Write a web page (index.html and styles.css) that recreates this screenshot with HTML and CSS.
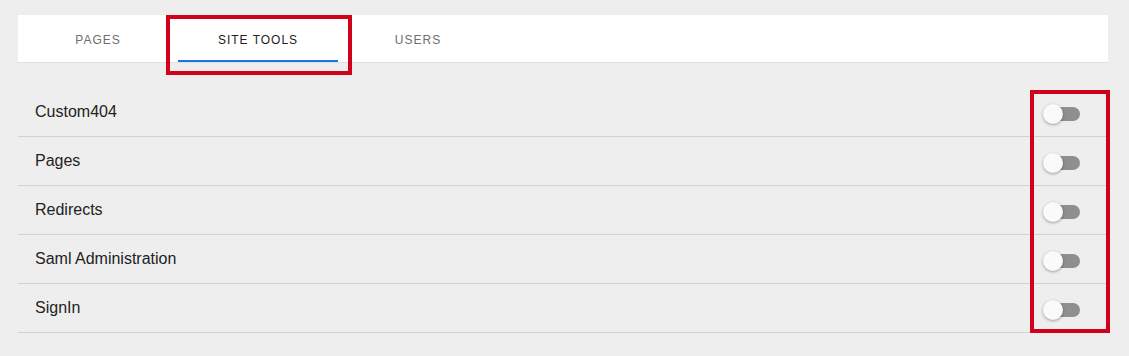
FILE: index.html
```html
<!DOCTYPE html>
<html>
<head>
<meta charset="utf-8">
<link rel="stylesheet" href="styles.css">
</head>
<body>
<div class="page">
  <div class="tabs">
    <div class="tab">PAGES</div>
    <div class="tab active">SITE TOOLS</div>
    <div class="tab">USERS</div>
  </div>
  <div class="list">
    <div class="row"><span class="label">Custom404</span><span class="switch"><span class="track"></span><span class="thumb"></span></span></div>
    <div class="row"><span class="label">Pages</span><span class="switch"><span class="track"></span><span class="thumb"></span></span></div>
    <div class="row"><span class="label">Redirects</span><span class="switch"><span class="track"></span><span class="thumb"></span></span></div>
    <div class="row"><span class="label">Saml Administration</span><span class="switch"><span class="track"></span><span class="thumb"></span></span></div>
    <div class="row"><span class="label">SignIn</span><span class="switch"><span class="track"></span><span class="thumb"></span></span></div>
  </div>
  <div class="mark mark-tab"></div>
  <div class="mark mark-toggles"></div>
</div>
</body>
</html>
```
FILE: styles.css
```css
html, body {
  margin: 0;
  padding: 0;
  background: #eeeeee;
  font-family: "Liberation Sans", Arial, sans-serif;
}
.page {
  position: relative;
  width: 1129px;
  height: 356px;
  padding: 15px 21px 0 18px;
  box-sizing: border-box;
}
.tabs {
  display: flex;
  height: 48px;
  background: #ffffff;
  border-bottom: 1px solid #e0e0e0;
  box-sizing: border-box;
}
.tab {
  width: 160px;
  display: flex;
  align-items: center;
  justify-content: center;
  font-size: 12px;
  letter-spacing: 1px;
  color: #6e6e6e;
  box-sizing: border-box;
  padding-top: 2px;
}
.tab.active {
  color: #222222;
  border-bottom: 2px solid #1a73e8;
  padding-top: 4px;
}
.list {
  margin-top: 25px;
}
.row {
  height: 49px;
  display: flex;
  align-items: center;
  justify-content: space-between;
  border-bottom: 1px solid #d3d3d3;
  box-sizing: border-box;
  padding: 0 28px 0 17px;
}
.label {
  font-size: 16px;
  color: #222222;
}
.switch {
  position: relative;
  width: 37px;
  height: 20px;
  margin-top: 3px;
}
.track {
  position: absolute;
  left: 7px;
  top: 3px;
  width: 30px;
  height: 14px;
  border-radius: 7px;
  background: #8f8f8f;
}
.thumb {
  position: absolute;
  left: 0;
  top: 0;
  width: 20px;
  height: 20px;
  border-radius: 50%;
  background: #fafafa;
  box-shadow: 0 1px 3px rgba(0,0,0,0.35);
}
.mark {
  position: absolute;
  border: 4px solid #d0021b;
  box-sizing: border-box;
}
.mark-tab {
  left: 166px;
  top: 15px;
  width: 186px;
  height: 60px;
}
.mark-toggles {
  left: 1030px;
  top: 90px;
  width: 80px;
  height: 243px;
}
```
